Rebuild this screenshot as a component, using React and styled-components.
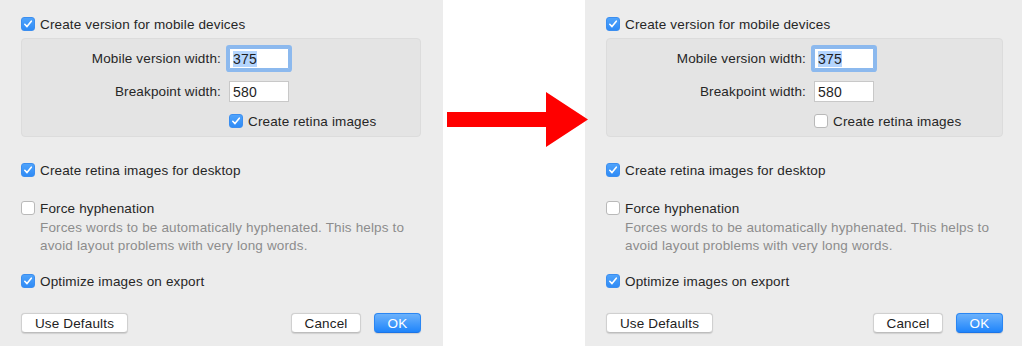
import React from "react";
import styled, { createGlobalStyle } from "styled-components";

const Global = createGlobalStyle`
  html, body { margin: 0; padding: 0; background: #ffffff; }
  body { font-family: "Liberation Sans", Arial, sans-serif; }
`;

const Stage = styled.div`
  display: flex;
  width: 1024px;
  height: 346px;
  background: #ffffff;
`;

const Panel = styled.div`
  width: ${(p) => p.$w}px;
  height: 346px;
  box-sizing: border-box;
  padding: 14px ${(p) => p.$padR}px 0 21px;
  background: #ececec;
  display: flex;
  flex-direction: column;
  font-size: 13.5px;
  letter-spacing: 0.15px;
  color: #262626;
  flex-shrink: 0;
`;

const Gap = styled.div`
  width: 142px;
  flex-shrink: 0;
  display: flex;
  align-items: flex-start;
`;

const ArrowSvg = styled.svg`
  margin-top: 92px;
  margin-left: 4px;
  margin-right: -3px;
  position: relative;
  z-index: 1;
  flex-shrink: 0;
`;

const CheckRow = styled.label`
  display: flex;
  align-items: center;
  gap: 5px;
  height: 20px;
  margin-top: ${(p) => p.$mt || 0}px;
  white-space: nowrap;
`;

const Box = styled.span`
  width: 14px;
  height: 14px;
  box-sizing: border-box;
  border-radius: 3px;
  flex-shrink: 0;
  display: flex;
  align-items: center;
  justify-content: center;
  background: ${(p) => (p.$on ? "linear-gradient(#4fa3fb, #2f8bf6)" : "#ffffff")};
  border: 1px solid ${(p) => (p.$on ? "#3b8ef0" : "#b9b9b9")};
`;

const Group = styled.div`
  margin-top: 4px;
  height: 99px;
  box-sizing: border-box;
  border: 1px solid #dcdcdc;
  border-radius: 4px;
  background: #e4e4e4;
  padding: 9px 0 5px 0;
  display: grid;
  grid-template-columns: 199px auto;
  grid-template-rows: 21px 21px 20px;
  column-gap: 8px;
  row-gap: 12px;
  align-items: center;
`;

const GroupCheck = styled.div`
  grid-column: 2;
  margin-top: -6px;
`;

const FieldLabel = styled.span`
  text-align: right;
`;

const Input = styled.span`
  width: 60px;
  height: 21px;
  box-sizing: border-box;
  border: 1px solid ${(p) => (p.$focus ? "#8cb9ee" : "#c8c8c8")};
  background: #ffffff;
  display: flex;
  align-items: center;
  padding-left: 3px;
  font-size: 14px;
  letter-spacing: 0.2px;
  color: #1e1e1e;
  box-shadow: ${(p) => (p.$focus ? "0 0 0 3px #8cb9ee" : "none")};
  border-radius: ${(p) => (p.$focus ? "1px" : "0")};
`;

const Selected = styled.span`
  background: #b4d5fe;
  line-height: 16px;
`;

const Desc = styled.div`
  margin-top: 1px;
  padding-left: 19px;
  color: #8c8c8c;
  line-height: 18px;
  white-space: nowrap;
`;

const Buttons = styled.div`
  margin-top: 22px;
  display: flex;
  align-items: center;
`;

const Button = styled.button`
  height: 20px;
  box-sizing: border-box;
  padding: 0;
  width: ${(p) => p.$w}px;
  margin-left: ${(p) => p.$ml || 0}px;
  font-family: inherit;
  font-size: 13.5px;
  letter-spacing: 0.15px;
  border-radius: 4px;
  border: 1px solid ${(p) => (p.$primary ? "#2a86f3" : "#d0d0d0")};
  border-bottom-color: ${(p) => (p.$primary ? "#1c74e6" : "#bdbdbd")};
  color: ${(p) => (p.$primary ? "#ffffff" : "#222222")};
  background: ${(p) => (p.$primary ? "linear-gradient(#6cb2fb, #1f85fb)" : "#ffffff")};
  box-shadow: 0 0.5px 1px rgba(0,0,0,0.12);
`;

const Spacer = styled.div`
  flex: 1;
`;

function Check() {
  return (
    <svg width="10" height="10" viewBox="0 0 10 10">
      <path d="M1.8 5.3 L4 7.6 L8.3 2.2" fill="none" stroke="#ffffff" strokeWidth="1.6" strokeLinecap="round" strokeLinejoin="round" />
    </svg>
  );
}

function CheckItem({ on, children, mt }) {
  return (
    <CheckRow $mt={mt}>
      <Box $on={on}>{on && <Check />}</Box>
      <span>{children}</span>
    </CheckRow>
  );
}

function Dialog({ w, padR, retina }) {
  return (
    <Panel $w={w} $padR={padR}>
      <CheckItem on>Create version for mobile devices</CheckItem>
      <Group>
        <FieldLabel>Mobile version width:</FieldLabel>
        <Input $focus>
          <Selected>375</Selected>
        </Input>
        <FieldLabel>Breakpoint width:</FieldLabel>
        <Input>580</Input>
        <GroupCheck>
          <CheckItem on={retina}>Create retina images</CheckItem>
        </GroupCheck>
      </Group>
      <CheckItem on mt={23}>Create retina images for desktop</CheckItem>
      <CheckItem mt={18}>Force hyphenation</CheckItem>
      <Desc>
        Forces words to be automatically hyphenated. This helps to
        <br />
        avoid layout problems with very long words.
      </Desc>
      <CheckItem on mt={16}>Optimize images on export</CheckItem>
      <Buttons>
        <Button $w={107}>Use Defaults</Button>
        <Spacer />
        <Button $w={70}>Cancel</Button>
        <Button $w={47} $ml={13} $primary>OK</Button>
      </Buttons>
    </Panel>
  );
}

export default function App() {
  return (
    <>
      <Global />
      <Stage>
        <Dialog w={443} padR={22} retina />
        <Gap>
          <ArrowSvg width="141" height="56" viewBox="0 0 141 56">
            <polygon points="0,20 99,20 99,0 141,27.5 99,55 99,35 0,35" fill="#ff0000" />
          </ArrowSvg>
        </Gap>
        <Dialog w={437} padR={19} retina={false} />
      </Stage>
    </>
  );
}
